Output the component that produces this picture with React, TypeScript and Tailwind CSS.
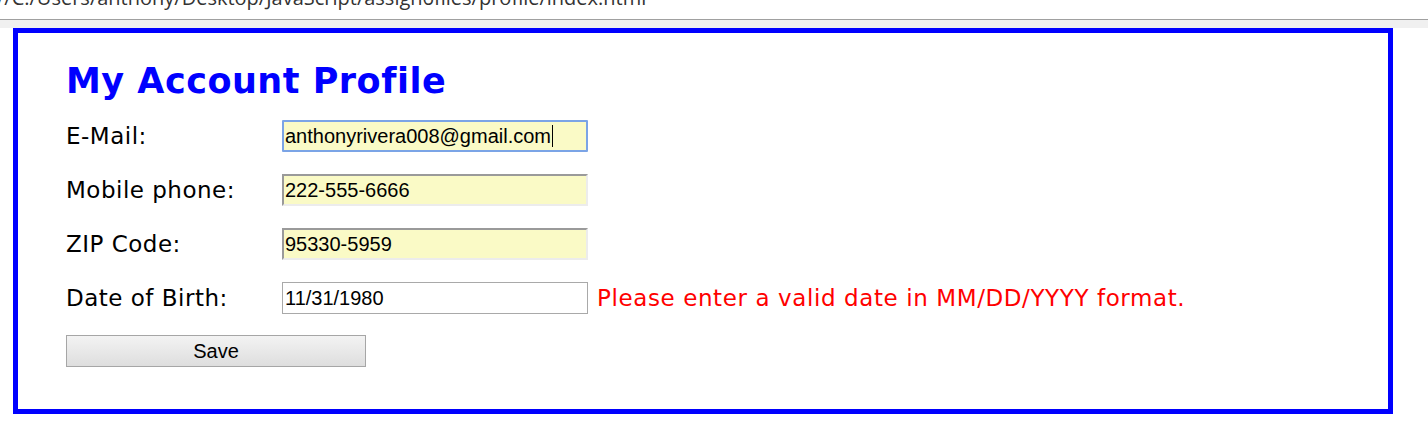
import React from 'react';

const fields = [
  { label: 'E-Mail:', value: 'anthonyrivera008@gmail.com', focused: true },
  { label: 'Mobile phone:', value: '222-555-6666' },
  { label: 'ZIP Code:', value: '95330-5959' },
];

export default function App() {
  return (
    <div className="w-[1428px] h-[447px] bg-white overflow-hidden">
      {/* address bar remnant */}
      <div className="h-[20px] overflow-hidden border-b border-[#a0a0a0]">
        <div className="-mt-[16px] -ml-[3px] text-[20px] leading-[28px] text-[#333] whitespace-nowrap" style={{ fontFamily: '"Open Sans", "Noto Sans", sans-serif' }}>
          //C:/Users/anthony/Desktop/JavaScript/assign6files/profile/index.html
        </div>
      </div>
      <div className="h-[8px] bg-[#f0f0f0]" />

      <div className="ml-[13px] w-[1380px] h-[386px] border-[5px] border-[#0000ff] pl-[48px] pt-[27px]" style={{ fontFamily: '"DejaVu Sans", Verdana, sans-serif' }}>
        <h1 className="text-[35px] leading-[42px] tracking-[0.5px] font-bold text-[#0000ff]">My Account Profile</h1>

        <div className="mt-[18px] flex flex-col gap-[22px]">
          {fields.map((f) => (
            <div key={f.label} className="flex items-center h-[32px]">
              <label className="w-[216px] text-[23px] tracking-[0.5px] text-black">{f.label}</label>
              <div
                className={`w-[306px] h-[32px] bg-[#fafac6] border-2 flex items-center pl-[1px] text-[20px] text-black ${
                  f.focused
                    ? 'border-[#7ba4e6] rounded-[1px]'
                    : 'border-t-[#9a9a9a] border-l-[#9a9a9a] border-b-[#ececec] border-r-[#ececec]'
                }`}
                style={{ fontFamily: '"Liberation Sans", Arial, sans-serif' }}
              >
                {f.value}
                {f.focused && <span className="inline-block w-[1px] h-[22px] bg-black ml-[1px]" />}
              </div>
            </div>
          ))}

          <div className="flex items-center h-[32px]">
            <label className="w-[216px] text-[23px] tracking-[0.5px] text-black">Date of Birth:</label>
            <div
              className="w-[306px] h-[32px] bg-white border border-[#a9a9a9] flex items-center pl-[2px] text-[20px] text-black"
              style={{ fontFamily: '"Liberation Sans", Arial, sans-serif' }}
            >
              11/31/1980
            </div>
            <span className="ml-[9px] text-[23px] tracking-[0.6px] text-[#ff0000]">Please enter a valid date in MM/DD/YYYY format.</span>
          </div>
        </div>

        <button
          className="mt-[21px] w-[300px] h-[32px] border border-[#a6a6a6] bg-gradient-to-b from-[#f3f3f3] to-[#dedede] text-[20px] text-black"
          style={{ fontFamily: '"Liberation Sans", Arial, sans-serif' }}
        >
          Save
        </button>
      </div>
    </div>
  );
}
